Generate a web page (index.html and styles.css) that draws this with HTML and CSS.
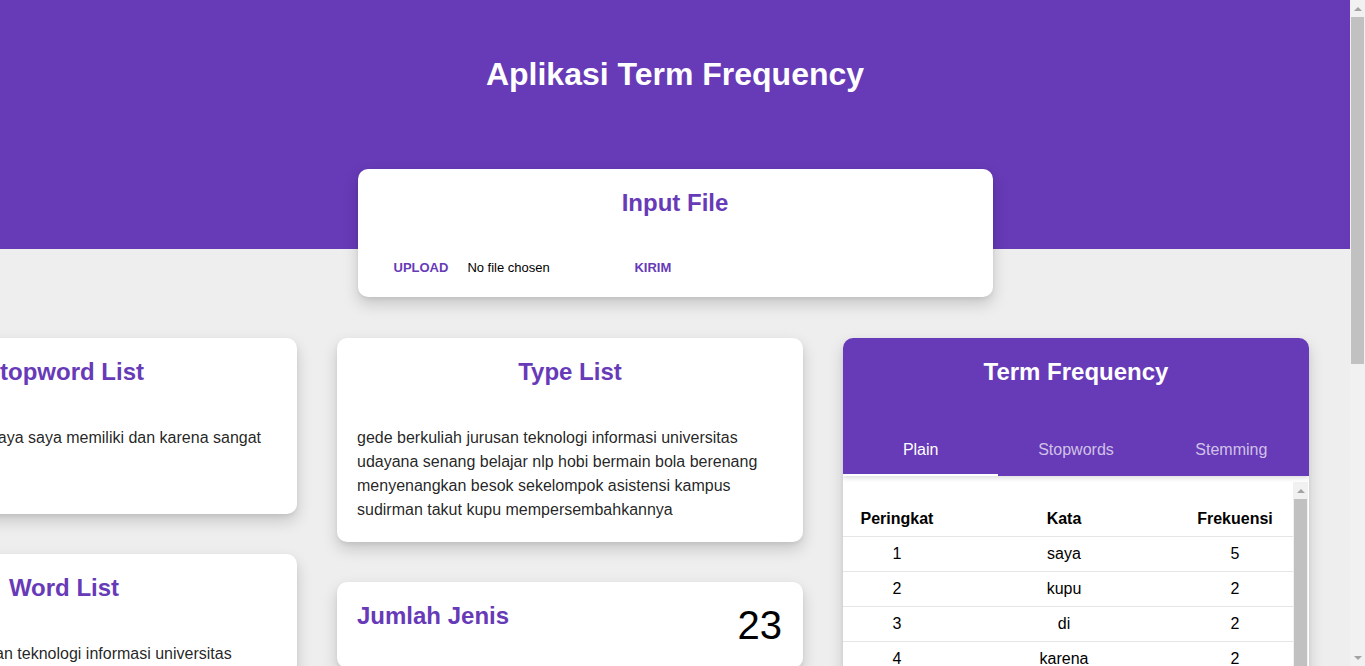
FILE: index.html
```html
<!DOCTYPE html>
<html lang="id">
<head>
<meta charset="utf-8">
<title>Aplikasi Term Frequency</title>
<link rel="stylesheet" href="styles.css">
</head>
<body>
<header class="hero">
  <h1 class="hero-title">Aplikasi Term Frequency</h1>
</header>
<main class="page">
  <section class="card upload-card">
    <h2 class="card-title">Input File</h2>
    <form class="upload-row">
      <span class="btn-flat">Upload</span>
      <span class="file-name">No file chosen</span>
      <span class="btn-flat">Kirim</span>
    </form>
  </section>

  <div class="columns">
    <div class="col">
      <section class="card card-short">
        <h2 class="card-title">Stopword List</h2>
        <p class="card-text">saya dan saya dan saya saya memiliki dan karena sangat karena di</p>
      </section>
      <section class="card">
        <h2 class="card-title">Word List</h2>
        <p class="card-text">gede berkuliah jurusan teknologi informasi universitas udayana senang belajar nlp hobi bermain bola berenang menyenangkan besok sekelompok asistensi kampus sudirman takut kupu kupu mempersembahkannya</p>
      </section>
    </div>

    <div class="col">
      <section class="card">
        <h2 class="card-title">Type List</h2>
        <p class="card-text">gede berkuliah jurusan teknologi informasi universitas udayana senang belajar nlp hobi bermain bola berenang menyenangkan besok sekelompok asistensi kampus sudirman takut kupu mempersembahkannya</p>
      </section>
      <section class="card count-card">
        <h2 class="card-title">Jumlah Jenis</h2>
        <span class="count-value">23</span>
      </section>
    </div>

    <div class="col">
      <section class="card tf-card">
        <div class="tf-head">
          <h2 class="card-title tf-title">Term Frequency</h2>
          <nav class="tabs">
            <span class="tab tab-active">Plain</span>
            <span class="tab">Stopwords</span>
            <span class="tab">Stemming</span>
          </nav>
        </div>
        <div class="tf-panel">
          <div class="tf-scroll">
            <table class="tf-table">
              <colgroup>
                <col class="c-rank">
                <col>
                <col class="c-freq">
              </colgroup>
              <thead>
                <tr><th>Peringkat</th><th>Kata</th><th>Frekuensi</th></tr>
              </thead>
              <tbody>
                <tr><td>1</td><td>saya</td><td>5</td></tr>
                <tr><td>2</td><td>kupu</td><td>2</td></tr>
                <tr><td>3</td><td>di</td><td>2</td></tr>
                <tr><td>4</td><td>karena</td><td>2</td></tr>
                <tr><td>5</td><td>gede</td><td>1</td></tr>
                <tr><td>6</td><td>berkuliah</td><td>1</td></tr>
                <tr><td>7</td><td>jurusan</td><td>1</td></tr>
                <tr><td>8</td><td>teknologi</td><td>1</td></tr>
                <tr><td>9</td><td>informasi</td><td>1</td></tr>
                <tr><td>10</td><td>universitas</td><td>1</td></tr>
                <tr><td>11</td><td>udayana</td><td>1</td></tr>
                <tr><td>12</td><td>memiliki</td><td>1</td></tr>
                <tr><td>13</td><td>dan</td><td>1</td></tr>
                <tr><td>14</td><td>sangat</td><td>1</td></tr>
                <tr><td>15</td><td>senang</td><td>1</td></tr>
                <tr><td>16</td><td>belajar</td><td>1</td></tr>
                <tr><td>17</td><td>nlp</td><td>1</td></tr>
                <tr><td>18</td><td>hobi</td><td>1</td></tr>
                <tr><td>19</td><td>bermain</td><td>1</td></tr>
                <tr><td>20</td><td>bola</td><td>1</td></tr>
              </tbody>
            </table>
          </div>
          <div class="scrollbar scrollbar-inner" aria-hidden="true">
            <span class="sb-btn"><span class="sb-arrow-up"></span></span>
            <span class="sb-thumb sb-thumb-inner"></span>
          </div>
        </div>
      </section>
    </div>
  </div>
</main>

<div class="scrollbar page-scrollbar" aria-hidden="true">
  <span class="sb-btn"><span class="sb-arrow-up"></span></span>
  <span class="sb-thumb sb-thumb-page"></span>
  <span class="sb-fill"></span>
  <span class="sb-btn"><span class="sb-arrow-down"></span></span>
</div>
</body>
</html>
```

FILE: styles.css
```css
* {
  box-sizing: border-box;
}

html {
  background: #eeeeee;
}

body {
  margin: 0 15px 0 0;
  font-family: "Liberation Sans", Arial, sans-serif;
  color: rgba(0, 0, 0, 0.87);
  background: #eeeeee;
}

/* decorative classic scrollbars, as seen in the reference */
.scrollbar {
  display: flex;
  flex-direction: column;
  flex: 0 0 15px;
  width: 15px;
  background: #f1f1f1;
}

.page-scrollbar {
  position: fixed;
  top: 0;
  right: 0;
  height: 100vh;
}

.sb-btn {
  display: flex;
  align-items: center;
  justify-content: center;
  height: 17px;
  flex: 0 0 17px;
}

.sb-arrow-up {
  width: 0;
  height: 0;
  border-left: 4px solid transparent;
  border-right: 4px solid transparent;
  border-bottom: 4px solid #a3a3a3;
}

.sb-arrow-down {
  width: 0;
  height: 0;
  border-left: 4px solid transparent;
  border-right: 4px solid transparent;
  border-top: 4px solid #a3a3a3;
}

.sb-thumb {
  display: block;
  margin: 0 1px;
  background: #c1c1c1;
}

.sb-thumb-page {
  flex: 0 0 347px;
}

.sb-fill {
  flex: 1 1 auto;
}

.hero {
  height: 249px;
  padding-top: 56px;
  background: #673ab7;
}

.hero-title {
  margin: 0;
  text-align: center;
  color: #ffffff;
  font-size: 32px;
  line-height: 37px;
  font-weight: bold;
}

.page {
  padding-bottom: 55px;
}

.card {
  background: #ffffff;
  border-radius: 10px;
  padding: 20px 20px 20px;
  box-shadow: 0 7px 15px rgba(0, 0, 0, 0.17), 0 2px 4px rgba(0, 0, 0, 0.06);
}

.card-title {
  margin: 0;
  font-size: 24px;
  line-height: 28px;
  font-weight: bold;
  color: #673ab7;
  text-align: center;
}

.card-text {
  margin: 40px 0 0;
  font-size: 16px;
  line-height: 24px;
}

.card-short {
  min-height: 176px;
}

.upload-card {
  width: 635px;
  margin: -80px auto 0;
  padding: 20px 36px 12px;
}

.upload-row {
  display: flex;
  align-items: center;
  height: 36px;
  margin: 32px 0 0;
}

.btn-flat {
  font-size: 13px;
  font-weight: bold;
  text-transform: uppercase;
  color: #673ab7;
}

.file-name {
  width: 167px;
  margin-left: 19px;
  font-size: 13px;
  color: #000000;
}

.columns {
  display: flex;
  justify-content: flex-end;
  align-items: flex-start;
  gap: 40px;
  margin-top: 41px;
  padding-right: 41px;
}

.col {
  flex: 0 0 466px;
  display: flex;
  flex-direction: column;
  gap: 40px;
}

.count-card {
  display: flex;
  justify-content: space-between;
  align-items: flex-start;
}

.count-card .card-title {
  text-align: left;
}

.count-value {
  font-size: 40px;
  line-height: 46px;
  color: #000000;
  margin-right: 1px;
}

.tf-card {
  padding: 0;
  overflow: hidden;
}

.tf-head {
  background: #673ab7;
  padding-top: 20px;
  box-shadow: 0 2px 5px rgba(0, 0, 0, 0.14);
  position: relative;
}

.tf-title {
  color: #ffffff;
  margin-bottom: 42px;
}

.tabs {
  display: flex;
  height: 48px;
}

.tab {
  flex: 1 1 0;
  height: 48px;
  line-height: 43px;
  text-align: center;
  font-size: 16px;
  color: rgba(255, 255, 255, 0.7);
  border-bottom: 2px solid transparent;
}

.tab-active {
  color: #ffffff;
  border-bottom-color: #ffffff;
}

.tf-panel {
  display: flex;
  height: 680px;
  margin: 6px 1px 0 0;
}

.tf-scroll {
  flex: 1 1 auto;
  min-width: 0;
  padding-top: 20px;
  overflow: hidden;
}

.sb-thumb-inner {
  flex: 0 0 440px;
}

.tf-table {
  width: 100%;
  border-collapse: collapse;
  table-layout: fixed;
  font-size: 16px;
  color: #000000;
}

.c-rank {
  width: 108px;
}

.c-freq {
  width: 116px;
}

.tf-table th,
.tf-table td {
  padding: 8px 0;
  line-height: 18px;
  text-align: center;
}

.tf-table th {
  font-weight: bold;
}

.tf-table tr {
  border-bottom: 1px solid #e5e5e5;
}
```
